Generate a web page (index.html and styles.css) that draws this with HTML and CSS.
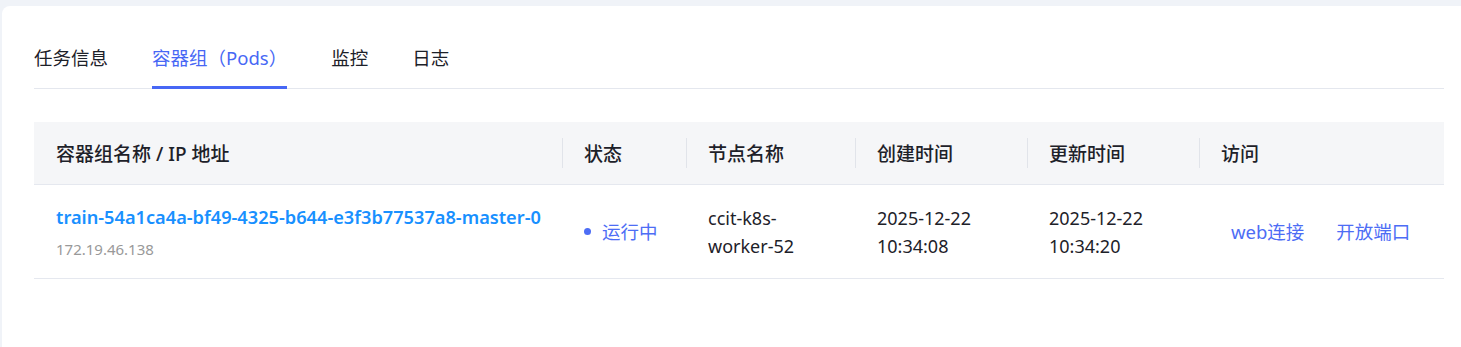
FILE: index.html
```html
<!DOCTYPE html>
<html lang="zh-CN">
<head>
<meta charset="utf-8">
<title>容器组</title>
<link rel="stylesheet" href="styles.css">
</head>
<body>
<div class="card">
  <div class="tabs">
    <div class="tab">任务信息</div>
    <div class="tab active">容器组（Pods）</div>
    <div class="tab">监控</div>
    <div class="tab">日志</div>
  </div>
  <table class="pods">
    <colgroup>
      <col class="c1"><col class="c2"><col class="c3"><col class="c4"><col class="c5"><col class="c6">
    </colgroup>
    <thead>
      <tr>
        <th>容器组名称 / IP 地址</th>
        <th class="sep">状态</th>
        <th class="sep">节点名称</th>
        <th class="sep">创建时间</th>
        <th class="sep">更新时间</th>
        <th class="sep">访问</th>
      </tr>
    </thead>
    <tbody>
      <tr>
        <td>
          <div class="pod-name">train-54a1ca4a-bf49-4325-b644-e3f3b77537a8-master-0</div>
          <div class="pod-ip">172.19.46.138</div>
        </td>
        <td><span class="status"><span class="dot"></span>运行中</span></td>
        <td class="wrap">ccit-k8s-worker-52</td>
        <td class="wrap">2025-12-22 10:34:08</td>
        <td class="wrap">2025-12-22 10:34:20</td>
        <td><div class="actions"><a class="link">web连接</a><a class="link">开放端口</a></div></td>
      </tr>
    </tbody>
  </table>
</div>
</body>
</html>
```
FILE: styles.css
```css
html, body {
  margin: 0;
  padding: 0;
}
body {
  background: #f0f3f8;
  font-family: "Noto Sans", "Noto Sans CJK SC", sans-serif;
  color: #1d2129;
}
.card {
  margin: 6px 0 0 2px;
  background: #ffffff;
  border-radius: 8px 0 0 0;
  padding: 40px 17px 0 32px;
  min-height: calc(100vh - 46px);
}
.tabs {
  display: flex;
  gap: 44px;
  border-bottom: 1px solid #e4e7ee;
}
.tab {
  font-size: 18.5px;
  line-height: 24px;
  padding-bottom: 16px;
  border-bottom: 3px solid transparent;
  margin-bottom: -1px;
  color: #1d2129;
}
.tab.active {
  color: #4767f5;
  border-bottom-color: #4767f5;
}
.pods {
  margin-top: 33px;
  width: 100%;
  border-collapse: collapse;
  table-layout: fixed;
}
.c1 { width: 528px; }
.c2 { width: 124px; }
.c3 { width: 169px; }
.c4 { width: 172px; }
.c5 { width: 172px; }
.pods th {
  height: 62px;
  background-color: #f5f6f8;
  font-size: 19px;
  font-weight: 500;
  text-align: left;
  padding: 0 22px;
  border-bottom: 1px solid #e5e8ef;
  color: #1d2129;
}
.pods th.sep {
  background-image: linear-gradient(#e1e4ea, #e1e4ea);
  background-repeat: no-repeat;
  background-position: 0 center;
  background-size: 1px 30px;
}
.pods td {
  height: 93px;
  padding: 0 22px;
  vertical-align: middle;
  border-bottom: 1px solid #e5e8ef;
  font-size: 18px;
  line-height: 28px;
}
.pod-name {
  color: #1890ff;
  font-size: 18.2px;
  font-weight: 600;
  line-height: 24px;
  white-space: nowrap;
}
.pod-ip {
  margin-top: 10px;
  color: #999999;
  font-size: 15px;
  line-height: 20px;
}
.status {
  display: flex;
  align-items: center;
  color: #4d6df5;
  font-size: 18.5px;
}
.dot {
  width: 7px;
  height: 7px;
  border-radius: 50%;
  background: #4d6df5;
  margin-right: 11px;
}
.actions {
  display: flex;
  gap: 32px;
  padding-left: 10px;
  font-size: 18.5px;
}
.link {
  color: #4d6df5;
  cursor: pointer;
}
```
